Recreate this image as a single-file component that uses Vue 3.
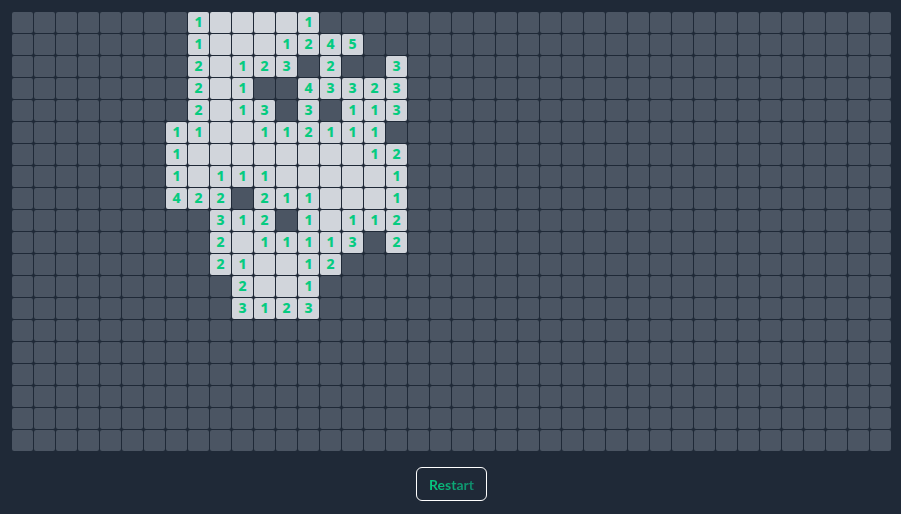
<script setup>
import { ref } from 'vue'

// '#' is a covered cell, '.' an open cell with no neighbouring mines.
const COLUMNS = 40
const ROWS = 20
const layout = [
  '########1....1',
  '########1...1245',
  '########2.123#2##3',
  '########2.1##43323',
  '########2.13#3#113',
  '#######11..112111#',
  '#######1........12',
  '#######1.111.....1',
  '#######422#211...1',
  '#########312#1.112',
  '#########2.11113#2',
  '#########21..12',
  '##########2..1',
  '##########3123',
]

const covered = () => Array.from({ length: ROWS }, () => '#'.repeat(COLUMNS).split(''))
const board = ref(
  Array.from({ length: ROWS }, (_, i) => (layout[i] ?? '').padEnd(COLUMNS, '#').split('')),
)

function open(row, column) {
  if (board.value[row][column] === '#') board.value[row][column] = '.'
}

function restart() {
  board.value = covered()
}
</script>

<template>
  <main class="game">
    <div class="board">
      <div v-for="(row, y) in board" :key="y" class="row">
        <button
          v-for="(cell, x) in row"
          :key="x"
          type="button"
          class="cell"
          :class="{ open: cell !== '#' }"
          @click="open(y, x)"
        >{{ cell === '#' || cell === '.' ? '' : cell }}</button>
      </div>
    </div>
    <button type="button" class="restart" @click="restart">
      <span class="label">Restart</span>
    </button>
  </main>
</template>

<style>
body {
  background: #1f2937;
}
</style>

<style scoped>
.game {
  display: flex;
  flex-direction: column;
  align-items: center;
  gap: 16px;
  padding: 12px 10px 12px 12px;
}

.board {
  display: flex;
  flex-direction: column;
  gap: 1px;
}

.row {
  display: flex;
  gap: 1px;
}

.cell {
  box-sizing: border-box;
  flex: none;
  width: 21px;
  height: 21px;
  padding: 0 0 2px;
  border: 0;
  border-radius: 2px;
  background: #4b5563;
  color: #06cb80;
  font: 800 14px/19px "Noto Sans", sans-serif;
  text-align: center;
  cursor: pointer;
}

.cell.open {
  background: #d1d5db;
}

.restart {
  padding: 7px 12px 5px;
  border: 1px solid #ffffff;
  border-radius: 6px;
  background: transparent;
  font: 700 14px/20px Lato, sans-serif;
  cursor: pointer;
}

.label {
  background: linear-gradient(to right, #06cb80, #118a6c);
  background-clip: text;
  color: transparent;
}
</style>
